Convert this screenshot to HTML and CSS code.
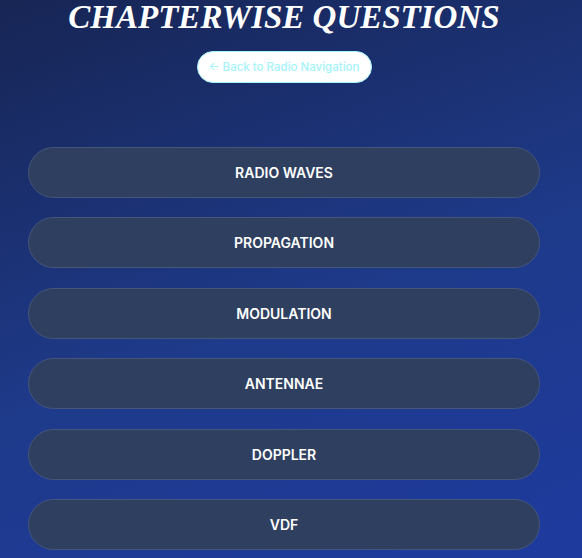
FILE: index.html
```html
<!DOCTYPE html>
<html>
<head>
<meta charset="utf-8">
<link rel="stylesheet" href="styles.css">
</head>
<body>
<div class="page">
  <h1 class="title">CHAPTERWISE QUESTIONS</h1>
  <div class="back-wrap"><a class="back" href="#">← Back to Radio Navigation</a></div>
  <div class="list">
    <a class="chapter" href="#">RADIO WAVES</a>
    <a class="chapter" href="#">PROPAGATION</a>
    <a class="chapter" href="#">MODULATION</a>
    <a class="chapter" href="#">ANTENNAE</a>
    <a class="chapter" href="#">DOPPLER</a>
    <a class="chapter" href="#">VDF</a>
  </div>
</div>
</body>
</html>
```
FILE: styles.css
```css
html, body {
  margin: 0;
  height: 100%;
}
body {
  background: linear-gradient(160deg, #172554 0%, #1e3a8a 55%, #1e3a9e 100%);
  font-family: Inter, "Noto Sans", sans-serif;
  overflow: hidden;
}
.page {
  width: 512px;
  margin-left: 28px;
  display: flex;
  flex-direction: column;
  align-items: center;
}
.title {
  margin: 0;
  font-family: "Liberation Serif", "Times New Roman", serif;
  font-style: italic;
  font-weight: bold;
  font-size: 33px;
  line-height: 34px;
  color: #ffffff;
  white-space: nowrap;
}
.back-wrap {
  margin-top: 17px;
}
.back {
  display: inline-block;
  box-sizing: border-box;
  width: 175px;
  height: 32px;
  line-height: 30px;
  text-align: center;
  background: #ffffff;
  border: 1px solid #a5f3fc;
  border-radius: 16px;
  color: #a5f3fc;
  font-size: 11.5px;
  font-weight: 500;
  text-decoration: none;
}
.list {
  margin-top: 64px;
  width: 100%;
  display: flex;
  flex-direction: column;
  gap: 19.4px;
}
.chapter {
  display: flex;
  align-items: center;
  justify-content: center;
  box-sizing: border-box;
  height: 51px;
  background: #2f3f5f;
  border: 1px solid #46557a;
  border-radius: 26px;
  color: #ffffff;
  font-size: 14px;
  font-weight: 600;
  text-decoration: none;
}
```
